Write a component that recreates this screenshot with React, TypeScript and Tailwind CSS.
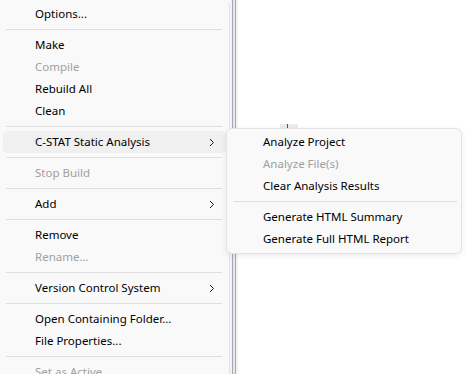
import React from "react";

type Item =
  | { type: "sep" }
  | { type: "item"; label: string; disabled?: boolean; sub?: boolean; active?: boolean };

const main: Item[] = [
  { type: "item", label: "Options..." },
  { type: "sep" },
  { type: "item", label: "Make" },
  { type: "item", label: "Compile", disabled: true },
  { type: "item", label: "Rebuild All" },
  { type: "item", label: "Clean" },
  { type: "sep" },
  { type: "item", label: "C-STAT Static Analysis", sub: true, active: true },
  { type: "sep" },
  { type: "item", label: "Stop Build", disabled: true },
  { type: "sep" },
  { type: "item", label: "Add", sub: true },
  { type: "sep" },
  { type: "item", label: "Remove" },
  { type: "item", label: "Rename...", disabled: true },
  { type: "sep" },
  { type: "item", label: "Version Control System", sub: true },
  { type: "sep" },
  { type: "item", label: "Open Containing Folder..." },
  { type: "item", label: "File Properties..." },
  { type: "sep" },
  { type: "item", label: "Set as Active", disabled: true },
];

const subItems: Item[] = [
  { type: "item", label: "Analyze Project" },
  { type: "item", label: "Analyze File(s)", disabled: true },
  { type: "item", label: "Clear Analysis Results" },
  { type: "sep" },
  { type: "item", label: "Generate HTML Summary" },
  { type: "item", label: "Generate Full HTML Report" },
];

function Chevron() {
  return (
    <svg width="6" height="9" viewBox="0 0 6 9" className="shrink-0">
      <polyline points="1,1 4.5,4.5 1,8" fill="none" stroke="#1a1a1a" strokeWidth="1" />
    </svg>
  );
}

export default function App() {
  return (
    <div
      className="relative w-[475px] h-[374px] overflow-hidden bg-white flex text-[11.5px] leading-none"
      style={{ fontFamily: '"Noto Sans", "Open Sans", sans-serif' }}
    >
      {/* main menu */}
      <div className="w-[230px] shrink-0 h-full bg-[#f9f9f9] border-r border-[#e3e3e3] rounded-tr-[6px] pt-[3px] px-[3px] flex flex-col">
        {main.map((it, i) =>
          it.type === "sep" ? (
            <div key={i} className="h-px bg-[#dfdfdf] my-[4px] ml-[3px] mr-[4px] shrink-0" />
          ) : (
            <div
              key={i}
              className={
                "h-[22px] shrink-0 flex items-center pl-[32px] pr-[11px] rounded-[4px] " +
                (it.active ? "bg-[#f0f0f0] " : "") +
                (it.disabled ? "text-[#a0a0a0]" : "text-[#000000]")
              }
            >
              <span className="flex-1">{it.label}</span>
              {it.sub && <Chevron />}
            </div>
          )
        )}
      </div>
      {/* splitter */}
      <div className="w-[8px] shrink-0 h-full flex bg-[#f3f3f3]">
        <div className="w-[2px]" />
        <div className="w-px bg-[#a5a7b8]" />
        <div className="w-[2px] bg-[#e8e8ee]" />
        <div className="w-px bg-[#a5a7b8]" />
      </div>
      <div className="flex-1 h-full bg-white" />

      {/* partially hidden content behind the submenu */}
      <div className="absolute left-[280px] top-[124px] w-[18px] h-[5px] bg-[#ececec]" />
      <div className="absolute left-[287px] top-[124px] w-px h-[5px] bg-[#555555]" />

      {/* submenu */}
      <div className="absolute left-[226px] top-[128px] w-[236px] bg-[#f9f9f9] border border-[#e3e3e3] rounded-[6px] shadow-[0_2px_6px_rgba(0,0,0,0.08)] pt-[2px] pb-[3px] px-[3px] flex flex-col">
        {subItems.map((it, i) =>
          it.type === "sep" ? (
            <div key={i} className="h-px bg-[#dfdfdf] my-[4px] ml-[4px] mr-[1px] shrink-0" />
          ) : (
            <div
              key={i}
              className={
                "h-[22px] shrink-0 flex items-center pl-[33px] rounded-[4px] " +
                (it.disabled ? "text-[#a0a0a0]" : "text-[#000000]")
              }
            >
              {it.label}
            </div>
          )
        )}
      </div>
    </div>
  );
}
